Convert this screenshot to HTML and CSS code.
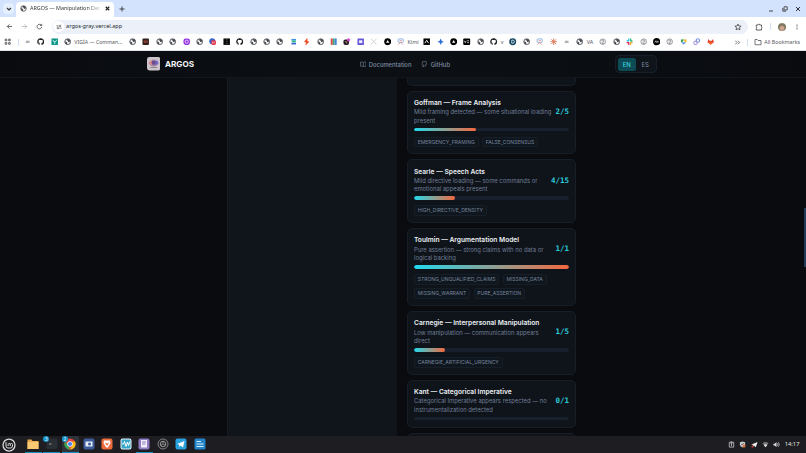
FILE: index.html
```
<!DOCTYPE html>
<html lang="en">
<head>
	<meta charset="UTF-8">
	<title>ARGOS — Manipulation Detector</title>
	<link rel="stylesheet" href="styles.css">
</head>
<body>
	<svg class="defs">
		<symbol id="globe" viewBox="0 0 16 16"><circle cx="8" cy="8" r="6.3" fill="none" stroke="#474a50" stroke-width="1.9"/><path d="M2 7l4 1.5 1.5 2.5-1 3-3-2zM6 2.5l4-.5 3.5 3-1.5 4-3-.5-.5-2.5-3-1z" fill="#474a50"/></symbol>
		<symbol id="ring" viewBox="0 0 16 16"><circle cx="8" cy="8" r="6" fill="none" stroke="#777a80" stroke-width="1.6"/><path d="M5 6l4-2 2 3-5 3 1 2 4-1" fill="none" stroke="#777a80" stroke-width="1.5"/></symbol>
		<symbol id="github" viewBox="0 0 16 16"><path fill="#17191d" d="M8 .6a7.5 7.5 0 0 0-2.4 14.6c.4.1.5-.2.5-.4v-1.4c-2.1.5-2.5-.9-2.5-.9-.4-.9-.9-1.1-.9-1.1-.7-.5.1-.5.1-.5.7.1 1.2.8 1.2.8.7 1.2 1.8.8 2.2.6.1-.5.3-.8.5-1-1.7-.2-3.4-.8-3.4-3.7 0-.8.3-1.5.8-2-.1-.2-.3-1 .1-2 0 0 .6-.2 2 .8a7 7 0 0 1 3.6 0c1.4-1 2-.8 2-.8.4 1 .2 1.8.1 2 .5.5.8 1.2.8 2 0 2.9-1.8 3.5-3.4 3.7.3.2.5.7.5 1.4v2.1c0 .2.1.5.5.4A7.5 7.5 0 0 0 8 .6z"/></symbol>
		<symbol id="dash" viewBox="0 0 16 16"><path d="M4 7h8M4 9.5h8" stroke="#777" stroke-width="1.5"/></symbol>
		<symbol id="kimi" viewBox="0 0 16 16"><rect x="2.500" y="2" width="11" height="7.500" rx="1.5" fill="none" stroke="#7ba4dc" stroke-width="1.8"/><path d="M3 14.500l5-5 5 5M5.500 5.700h5" fill="none" stroke="#e58b86" stroke-width="1.8"/></symbol>
		<symbol id="blackdot" viewBox="0 0 16 16"><circle cx="8" cy="8" r="7.5" fill="#000"/><path d="M8 4.5l3.5 6h-7z" fill="#fff"/></symbol>
	</svg>

	<div class="tabstrip">
		<div class="tab-search"><svg viewBox="0 0 8 8"><path d="M2 3l2 2 2-2" fill="none" stroke="#33363b" stroke-width="1.2"/></svg></div>
		<div class="tab">
			<svg class="fav"><use href="#globe"/></svg>
			<span class="tab-title">ARGOS — Manipulation Det</span>
			<svg class="tab-close" viewBox="0 0 8 8"><path d="M2 2l4 4M6 2L2 6" stroke="#222" stroke-width="1.3"/></svg>
		</div>
		<svg class="new-tab" viewBox="0 0 8 8"><path d="M4 1.5v5M1.5 4h5" stroke="#444" stroke-width="1"/></svg>
		<div class="win">
			<svg viewBox="0 0 8 8"><path d="M2 6h4" stroke="#444"/></svg>
			<svg viewBox="0 0 8 8"><path d="M3 1.8h3.2V5H3zM1.8 3v3.2H5" fill="none" stroke="#444" stroke-width=".9"/></svg>
			<svg viewBox="0 0 8 8"><path d="M2 2l4 4M6 2L2 6" stroke="#333" stroke-width="1"/></svg>
		</div>
	</div>

	<div class="toolbar">
		<svg class="nav-btn" viewBox="0 0 16 16"><path d="M14 8H3M8 3L3 8l5 5" fill="none" stroke="#444" stroke-width="1.8"/></svg>
		<svg class="nav-btn" viewBox="0 0 16 16"><path d="M2 8h11M8 3l5 5-5 5" fill="none" stroke="#aaa" stroke-width="1.6"/></svg>
		<svg class="nav-btn" viewBox="0 0 16 16"><path d="M13 9a5.3 5.3 0 1 1-1.5-4.5M13 2v4H9" fill="none" stroke="#444" stroke-width="1.8"/></svg>
		<div class="address">
			<span class="site-info"><svg viewBox="0 0 16 16"><path d="M1 5h6M9 11h6" stroke="#444" stroke-width="1.8"/><circle cx="11" cy="5" r="2" fill="none" stroke="#444" stroke-width="1.8"/><circle cx="5" cy="11" r="2" fill="none" stroke="#444" stroke-width="1.8"/></svg></span>
			<span class="url">argos-gray.vercel.app</span>
			<svg class="star" viewBox="0 0 16 16"><path d="M8 2l1.8 4 4.4.4-3.3 2.9 1 4.3L8 11.3l-3.9 2.3 1-4.3L1.8 6.4 6.2 6z" fill="none" stroke="#444" stroke-width="1.6"/></svg>
		</div>
		<svg class="ext" viewBox="0 0 16 16"><path d="M2.5 4h3.5a1.7 1.7 0 0 1 3.4 0H13v3.5a1.7 1.7 0 0 1 0 3V14H2.5v-3.5a1.7 1.7 0 0 0 0-3z" fill="none" stroke="#444" stroke-width="1.7"/></svg>
		<span class="sep"></span>
		<span class="avatar"></span>
		<svg class="more" viewBox="0 0 16 16"><g fill="#444"><circle cx="8" cy="3" r="1.5"/><circle cx="8" cy="8" r="1.5"/><circle cx="8" cy="13" r="1.5"/></g></svg>
	</div>

	<div class="bookmarks">
		<i><svg viewBox="0 0 16 16"><path d="M2.5 2.5h3.5v3.5H2.5zM10 2.5h3.5v3.5H10zM2.5 10h3.5v3.5H2.5zM10 10h3.5v3.5H10z" fill="none" stroke="#55585e" stroke-width="2"/></svg></i>
		<span class="sep first"></span>
		<i><svg><use href="#dash"/></svg></i>
		<i><svg><use href="#github"/></svg></i>
		<i><svg viewBox="0 0 16 16"><rect x="1" y="1" width="14" height="14" fill="#0d9488"/><path d="M4 4l2 4h4l2-4M8 8v5" fill="none" stroke="#d7fff8" stroke-width="1.8"/></svg></i>
		<i><svg><use href="#globe"/></svg></i>
		<span class="label vigia">VIGÍA — Comman…</span>
		<i><svg><use href="#globe"/></svg></i>
		<i><svg viewBox="0 0 16 16"><rect x="1" y="1" width="14" height="14" rx="2" fill="#33201d"/><path d="M5 5v6M8 5v6M11 5v6M4 8h8" stroke="#b6523c" stroke-width="1.3"/></svg></i>
		<i><svg><use href="#globe"/></svg></i>
		<i><svg><use href="#globe"/></svg></i>
		<i><svg viewBox="0 0 16 16"><rect x="1" y="1" width="14" height="14" rx="5" fill="#9233df"/><circle cx="8" cy="8" r="3.5" fill="none" stroke="#f0d6ff" stroke-width="2"/></svg></i>
		<i><svg><use href="#globe"/></svg></i>
		<i><svg viewBox="0 0 16 16"><circle cx="7" cy="7" r="6.5" fill="#3f65c8"/><rect x="5" y="5" width="10" height="10" rx="3" fill="#e0344a"/><path d="M8 8v4M11 8v4" stroke="#fff" stroke-width="1.3"/></svg></i>
		<i><svg viewBox="0 0 16 16"><rect x="1" y="1" width="14" height="14" fill="#080808"/><path d="M6 4h4M6 8h4M6 12h4" stroke="#777" stroke-width="1.2"/></svg></i>
		<i><svg><use href="#github"/></svg></i>
		<i><svg><use href="#globe"/></svg></i>
		<i><svg><use href="#globe"/></svg></i>
		<i><svg><use href="#globe"/></svg></i>
		<i><svg viewBox="0 0 16 16"><path d="M3 2h10v3.500H3z" fill="#3e91e0"/><path d="M3 5.500h9l1 4H5z" fill="#32b98a"/><path d="M3 10.500h10V14H3z" fill="#3e66d8"/></svg></i>
		<i><svg viewBox="0 0 16 16"><path d="M9 1L3 8l4 1-1 6 7-7-4-1z" fill="#ee4b22" stroke="#ee4b22"/></svg></i>
		<i><svg><use href="#globe"/></svg></i>
		<i><svg viewBox="0 0 16 16"><path d="M1.500 1h4.500v14H1.500z" fill="#dd4b4b"/><path d="M6 1h4v14H6z" fill="#41a678"/><path d="M10 1h4.500v14H10z" fill="#4388d8"/></svg></i>
		<i><svg viewBox="0 0 16 16"><rect x="1" y="3" width="12" height="12" rx="4" fill="#251b2b"/><circle cx="12" cy="4" r="3.5" fill="#d64bd1"/><path d="M4 8h4v4" fill="none" stroke="#e4b35e" stroke-width="1.5"/></svg></i>
		<i><svg viewBox="0 0 16 16"><rect x="1" y="1" width="14" height="14" rx="1" fill="#6558d8"/><rect x="4.5" y="5" width="7" height="6" fill="#f1efff"/></svg></i>
		<i><svg viewBox="0 0 16 16"><path d="M2 2l12 12M14 2L9 7M7 9l-5 5" stroke="#bbb" stroke-width="1.5"/></svg></i>
		<i><svg><use href="#blackdot"/></svg></i>
		<i><svg><use href="#kimi"/></svg></i>
		<span class="label kimi">Kimi</span>
		<i><svg viewBox="0 0 16 16"><rect x="1" y="1" width="14" height="14" fill="#000"/><path d="M4 11l4-6 4 6" fill="none" stroke="#fff" stroke-width="2"/></svg></i>
		<i><svg viewBox="0 0 16 16"><path d="M8 1q1 6 7 7-6 1-7 7-1-6-7-7 6-1 7-7z" fill="#2f6fd8"/></svg></i>
		<i><svg><use href="#blackdot"/></svg></i>
		<i><svg viewBox="0 0 16 16"><rect x=".5" y="1" width="15" height="14" rx="2" fill="#000"/><path d="M3 6l2 4 2-4M9 6h4M9 10h4" fill="none" stroke="#fff" stroke-width="1.5"/></svg></i>
		<i><svg><use href="#globe"/></svg></i>
		<i><svg><use href="#github"/></svg></i>
		<span class="label v">v</span>
		<i><svg viewBox="0 0 16 16"><circle cx="8" cy="8" r="7.5" fill="#17455d"/><path d="M6 4.5h2a3.5 3.5 0 0 1 0 7H6z" fill="none" stroke="#d8f0ff" stroke-width="1.8"/></svg></i>
		<i><svg><use href="#globe"/></svg></i>
		<i><svg><use href="#kimi"/></svg></i>
		<i><svg viewBox="0 0 16 16"><path d="M8 1v14M1 8h14M3 3l10 10M13 3L3 13" stroke="#dc7050" stroke-width="1.9"/></svg></i>
		<i><svg><use href="#dash"/></svg></i>
		<i><svg><use href="#globe"/></svg></i>
		<span class="label va">VA</span>
		<i><svg><use href="#ring"/></svg></i>
		<i><svg><use href="#globe"/></svg></i>
		<i><svg viewBox="0 0 16 16" stroke-width="2.8" stroke-linecap="round"><path d="M6 2v4M2.5 6H6" stroke="#36c5f0"/><path d="M10 2v4M13 6.5h-2" stroke="#2eb67d"/><path d="M10 10v4M10 10h3.5" stroke="#ecb22e"/><path d="M6 10v4M2.5 10H5" stroke="#e01e5a"/></svg></i>
		<i><svg><use href="#ring"/></svg></i>
		<i><svg viewBox="0 0 16 16"><circle cx="8" cy="8" r="7.8" fill="#000"/><path d="M4 10l2-4 2 4M9 6v4M11 6v4" fill="none" stroke="#fff" stroke-width="1.3"/></svg></i>
		<i><svg><use href="#ring"/></svg></i>
		<i><svg viewBox="0 0 16 16"><path d="M2 3h6v6H2z" fill="#38a45a"/><path d="M8 3h6v6H8z" fill="#f1bd2d"/><path d="M3 9h10l-5 5z" fill="#3d7fe5"/><circle cx="8" cy="7.5" r="2" fill="#fff"/></svg></i>
		<i><svg viewBox="0 0 16 16"><rect x="7" y="2" width="7" height="7" rx="2" fill="none" stroke="#5278df" stroke-width="2"/><rect x="2" y="7" width="7" height="7" rx="2" fill="none" stroke="#9a80cf" stroke-width="2"/></svg></i>
		<i><svg viewBox="0 0 16 16"><path d="M8 14.5L1 9l2-7 2.5 4h5L13 2l2 7z" fill="#e2432a"/><path d="M8 14.5L3.5 9h9z" fill="#fc6d26"/></svg></i>
		<svg class="chevrons" viewBox="0 0 16 16"><path d="M3 4l4 4-4 4M9 4l4 4-4 4" fill="none" stroke="#444" stroke-width="1.7"/></svg>
		<span class="sep"></span>
		<svg class="folder" viewBox="0 0 16 16"><path d="M2 3h4.5L8 5h6v8.5H2z" fill="none" stroke="#555" stroke-width="1.6"/></svg>
		<span class="label all">All Bookmarks</span>
	</div>

	<header class="nav">
		<div class="brand">
			<svg class="logo" viewBox="0 0 28 28"><rect width="28" height="28" rx="5" fill="#cdc5cb"/><path d="M3 13q11-16 22 0-11 15-22 0z" fill="#a58aa8"/><circle cx="9" cy="12" r="4.5" fill="#d98a84"/><circle cx="19" cy="12" r="4.5" fill="#746ac7"/><circle cx="14" cy="12" r="4.5" fill="#6d4b90"/><path d="M7 22h14" stroke="#8d8290" stroke-width="2"/></svg>
			<span>ARGOS</span>
		</div>
		<nav class="links">
			<a><svg viewBox="0 0 16 16"><path d="M8 4v10M8 4Q7 2.5 5 2.5H1.5v10H5.5Q7 12.5 8 14q1-1.5 2.5-1.5h4v-10H11Q9 2.5 8 4z"/></svg>Documentation</a>
			<a><svg viewBox="0 0 16 16"><path d="M10 15v-2.5q0-1.5-.7-2.2 4-.4 4-4.3 0-1.4-.9-2.5.4-1.2 0-2.5-1.3 0-2.6 1-1.8-.4-3.6 0Q4.9 1 3.6 1q-.4 1.3 0 2.5-.9 1.1-.9 2.5 0 3.9 4 4.3Q6 11 6 12.5V15M6 13q-3 1-4.5-2"/></svg>GitHub</a>
		</nav>
		<div class="lang"><span class="on">EN</span><span>ES</span></div>
	</header>

	<main class="page">
		<div class="side"></div>
		<div class="cards">
			<section class="card cut"></section>
			<section class="card">
				<div class="head">
					<div class="info"><h3>Goffman — Frame Analysis</h3><p>Mild framing detected — some situational loading<br>present</p></div>
					<b>2/5</b>
				</div>
				<div class="bar"><div style="width:40%"></div></div>
				<div class="tags"><span>EMERGENCY_FRAMING</span><span>FALSE_CONSENSUS</span></div>
			</section>
			<section class="card">
				<div class="head">
					<div class="info"><h3>Searle — Speech Acts</h3><p>Mild directive loading — some commands or<br>emotional appeals present</p></div>
					<b>4/15</b>
				</div>
				<div class="bar"><div style="width:26.7%"></div></div>
				<div class="tags"><span>HIGH_DIRECTIVE_DENSITY</span></div>
			</section>
			<section class="card">
				<div class="head">
					<div class="info"><h3>Toulmin — Argumentation Model</h3><p>Pure assertion — strong claims with no data or<br>logical backing</p></div>
					<b>1/1</b>
				</div>
				<div class="bar"><div style="width:100%"></div></div>
				<div class="tags"><span>STRONG_UNQUALIFIED_CLAIMS</span><span>MISSING_DATA</span><span>MISSING_WARRANT</span><span>PURE_ASSERTION</span></div>
			</section>
			<section class="card">
				<div class="head">
					<div class="info"><h3>Carnegie — Interpersonal Manipulation</h3><p>Low manipulation — communication appears<br>direct</p></div>
					<b>1/5</b>
				</div>
				<div class="bar"><div style="width:20%"></div></div>
				<div class="tags"><span>CARNEGIE_ARTIFICIAL_URGENCY</span></div>
			</section>
			<section class="card no-tags">
				<div class="head">
					<div class="info"><h3>Kant — Categorical Imperative</h3><p>Categorical Imperative appears respected — no<br>instrumentalization detected</p></div>
					<b>0/1</b>
				</div>
				<div class="bar"><div style="width:0%"></div></div>
			</section>
			<section class="card cut"></section>
		</div>
		<div class="scroll-thumb"></div>
	</main>

	<footer class="taskbar">
		<svg class="mint" viewBox="0 0 28 28"><circle cx="14" cy="14" r="12" fill="none" stroke="#ddd" stroke-width="2.5"/><path d="M8 8v8q0 4 4 4h5q4 0 4-4v-3q0-2-2.2-2t-2.2 2v3M16.6 13q0-2-2.2-2t-2.2 2v3" fill="none" stroke="#ddd" stroke-width="2"/></svg>
		<div class="apps">
			<div class="app open"><svg viewBox="0 0 24 24"><path d="M1 3h8l2 3h12v16H1z" fill="#e8a94f"/><path d="M1 8h22v14H1z" fill="#fac873"/></svg></div>
			<div class="app open"><svg viewBox="0 0 24 24"><rect x="1" y="1" width="22" height="21" rx="3" fill="#2a2f35"/><path d="M6 12h5" stroke="#999" stroke-width="2"/></svg><em>3</em></div>
			<div class="app open active"><svg viewBox="0 0 24 24"><circle cx="12" cy="12" r="11" fill="#e9483b"/><path d="M2 7l6 7 4 9A11 11 0 0 1 2 7z" fill="#34a853"/><path d="M12 23l5-9V7h5a11 11 0 0 1-10 16z" fill="#fbc116"/><circle cx="12" cy="12" r="5.5" fill="#fff"/><circle cx="12" cy="12" r="4.2" fill="#4285f4"/></svg><em>2</em></div>
			<div class="app"><svg viewBox="0 0 24 24"><rect x="1" y="1" width="22" height="22" rx="4" fill="#3d5c9c"/><path d="M5 7h14v10H5z" fill="#e8edf7"/><circle cx="13" cy="12" r="3" fill="#3d5c9c"/></svg></div>
			<div class="app"><svg viewBox="0 0 24 24"><rect x="1" y="1" width="22" height="22" rx="4" fill="#ed6a3b"/><path d="M6 5h12l1 5-4 7-3 3-3-3-4-7z" fill="#fff"/><path d="M8 9l4 2 4-2-3 6h-2z" fill="#ed6a3b"/></svg></div>
			<div class="app"><svg viewBox="0 0 24 24"><rect x="1" y="1" width="22" height="22" rx="4" fill="#e5f5fa"/><rect x="3" y="3" width="18" height="18" rx="2" fill="#38a6c9"/><path d="M4 12h3l2-5 3 10 3-9 2 7 3-8" fill="none" stroke="#fff" stroke-width="2"/></svg></div>
			<div class="app open"><svg viewBox="0 0 24 24"><rect x="1" y="1" width="22" height="22" rx="4" fill="#8e7cc3"/><path d="M6 4h12v15H6z" fill="#f2effa"/><path d="M8 8h8M8 12h7" stroke="#8e7cc3" stroke-width="2"/></svg></div>
			<div class="app"><svg viewBox="0 0 24 24"><circle cx="12" cy="12" r="10" fill="#202124" stroke="#8d8d90" stroke-width="1.8"/><circle cx="12" cy="12" r="5.5" fill="none" stroke="#98989b" stroke-width="2"/><path d="M12 12V6M12 12l5 3M12 12l-5 3" stroke="#98989b" stroke-width="1.6"/></svg></div>
			<div class="app"><svg viewBox="0 0 24 24"><rect x="1" y="1" width="22" height="22" rx="4" fill="#28a0db"/><path d="M4 12l15-6-3 13-5-4-2 3-1-5z" fill="#fff"/></svg></div>
			<div class="app"><svg viewBox="0 0 24 24"><rect x="1" y="1" width="22" height="22" rx="3" fill="#2285c8"/><path d="M5 7h9M5 12h14M5 17h14" stroke="#d9f0ff" stroke-width="2.2"/></svg></div>
		</div>
		<div class="tray">
			<svg viewBox="0 0 16 16"><path d="M3 3h10v11H3zM6 2h4M8 6v6M6 6h4" fill="none" stroke="#ddd" stroke-width="1.6"/></svg>
			<svg viewBox="0 0 16 16"><path d="M8 1l6 2v5q0 5-6 7-6-2-6-7V3z" fill="#c9c9c9"/><path d="M5 7l2 2 4-4" fill="none" stroke="#333" stroke-width="1.5"/><circle cx="11.5" cy="11.5" r="3.5" fill="#df7039"/></svg>
			<svg viewBox="0 0 16 16"><path d="M1 8l14-6-4 12-4-3-2 2V9z" fill="#eee"/><circle cx="3.5" cy="12.5" r="2.5" fill="#d93838"/></svg>
			<svg viewBox="0 0 16 16"><path d="M1 5q7-6 14 0l-7 9z" fill="#777"/><path d="M4 9q4-3 8 0l-4 5z" fill="#ddd"/></svg>
			<svg viewBox="0 0 16 16"><path d="M1 6h3l4-4v12l-4-4H1z" fill="#ddd"/><path d="M10 5q2 3 0 6M12.5 3q3.5 5 0 10" fill="none" stroke="#ddd" stroke-width="1.6"/></svg>
			<span>14:17</span>
		</div>
	</footer>
</body>
</html>
```
FILE: styles.css
```
*{
	margin: 0;
	padding: 0;
	box-sizing: border-box;
}
body{
	width: 806px;
	height: 453px;
	overflow: hidden;
	display: flex;
	flex-direction: column;
	background: #090b0f;
	font-family: Inter, "Liberation Sans", sans-serif;
}
svg{
	display: block;
	flex: none;
}
.defs{
	position: absolute;
	width: 0;
	height: 0;
}

/* browser window */
.tabstrip{
	height: 17px;
	flex: none;
	display: flex;
	align-items: center;
	background: #d3e3fd;
	padding-left: 3px;
}
.tab-search{
	width: 11px;
	height: 11px;
	border-radius: 4px;
	background: #e6effe;
	padding: 1.5px;
}
.tab-search svg{
	width: 8px;
	height: 8px;
}
.tab{
	width: 98px;
	height: 15px;
	margin: 2px 0 0 2px;
	padding: 0 3px 2px 4px;
	display: flex;
	align-items: center;
	background: #fff;
	border-radius: 4px 4px 0 0;
}
.fav{
	width: 7px;
	height: 7px;
}
.tab-title{
	width: 72px;
	margin-left: 3px;
	white-space: nowrap;
	font: 5.4px/9px "Noto Sans", sans-serif;
	color: #33363b;
	-webkit-mask-image: linear-gradient(90deg, #000 80%, transparent);
	mask-image: linear-gradient(90deg, #000 80%, transparent);
}
.tab-close{
	width: 7px;
	height: 7px;
	margin-left: 2px;
}
.new-tab{
	width: 8px;
	height: 8px;
	margin-left: 4px;
}
.win{
	display: flex;
	gap: 5.5px;
	margin-left: auto;
	padding-right: 4px;
}
.win svg{
	width: 8px;
	height: 8px;
}
.toolbar{
	height: 19px;
	flex: none;
	display: flex;
	align-items: center;
	background: #fff;
	padding: 0 6px;
}
.nav-btn{
	width: 7px;
	height: 7px;
	margin-right: 8.2px;
}
.address{
	width: 696px;
	height: 14px;
	border-radius: 7px;
	background: #ebf0f9;
	display: flex;
	align-items: center;
	padding: 0 6px 0 1.5px;
}
.site-info{
	width: 11px;
	height: 11px;
	border-radius: 50%;
	background: #fff;
	padding: 2.5px;
}
.site-info svg{
	width: 6px;
	height: 6px;
}
.url{
	margin-left: 2px;
	font: 5.55px/9px "Noto Sans", sans-serif;
	color: #25282d;
}
.star{
	width: 8px;
	height: 8px;
	margin-left: auto;
}
.ext{
	width: 8px;
	height: 8px;
	margin-left: 7px;
}
.sep{
	width: 1px;
	height: 7px;
	background: #cfe0f5;
}
.toolbar .sep{
	margin: 0 7px;
}
.avatar{
	width: 8px;
	height: 8px;
	border-radius: 50%;
	background: radial-gradient(circle at 50% 65%, #d0a58d 25%, #766d59 50%, #a9ae9a);
}
.more{
	width: 6px;
	height: 6px;
	margin-left: 8px;
}
.bookmarks{
	height: 15px;
	flex: none;
	display: flex;
	align-items: center;
	background: #fff;
	padding: 0 6px 2px 1.3px;
	border-bottom: 1px solid #dfe3ea;
}
.bookmarks i{
	width: 13.42px;
	flex: none;
	display: flex;
	justify-content: center;
}
.bookmarks i svg{
	width: 7.4px;
	height: 7.4px;
}
.bookmarks .first{
	margin: 0 2px 0 3px;
}
.label{
	flex: none;
	white-space: nowrap;
	font: 5.4px/9px "Noto Sans", sans-serif;
	color: #55585e;
}
.vigia{
	width: 51.6px;
	font-size: 5.2px;
}
.kimi{
	width: 12.8px;
}
.v{
	width: 5.6px;
}
.va{
	width: 9.6px;
}
.chevrons{
	width: 7px;
	height: 7px;
	margin-left: auto;
}
.bookmarks .chevrons + .sep{
	margin: 0 6px 0 6px;
}
.folder{
	width: 8px;
	height: 8px;
	margin-right: 2.5px;
}
.all{
	font-size: 5.3px;
}

/* argos header */
.nav{
	height: 27px;
	flex: none;
	display: grid;
	grid-template-columns: 213px 1fr 42px;
	align-items: center;
	padding: 0 149px 0 146.5px;
	background: linear-gradient(90deg, #090b0f, #0c1015 50%, #090b0f);
	border-bottom: 1px solid #11171d;
}
.brand{
	display: flex;
	align-items: center;
	gap: 5px;
	color: #f4f6f8;
	font-size: 8.15px;
	font-weight: 700;
}
.logo{
	width: 13.4px;
	height: 13.4px;
}
.links{
	display: flex;
	gap: 10px;
}
.links a{
	display: flex;
	align-items: center;
	gap: 2.6px;
	color: #7f8ea2;
	font-size: 5.85px;
	font-weight: 500;
}
.links svg{
	width: 6.7px;
	height: 6.7px;
	fill: none;
	stroke: #7f8ea2;
	stroke-width: 1.4;
}
.lang{
	width: 42px;
	height: 18px;
	padding: 1.5px;
	display: flex;
	border: 1px solid #161f29;
	border-radius: 4px;
	background: #0f141b;
	color: #718094;
	font-size: 6px;
	font-weight: 500;
}
.lang span{
	width: 19px;
	line-height: 13px;
	text-align: center;
	border-radius: 2.5px;
}
.lang .on{
	background: #0d4b55;
	color: #3bd1df;
}

/* analysis page */
.page{
	flex: 1;
	min-height: 0;
	display: flex;
	position: relative;
	overflow: hidden;
	padding-left: 227px;
}
.side{
	width: 170px;
	background: #10151c;
	border-left: 1px solid #151b22;
	flex: none;
}
.cards{
	width: 169.5px;
	margin-left: 9.5px;
	display: flex;
	flex-direction: column;
	gap: 5px;
}
.card{
	flex: none;
	padding: 7.3px 6px 5.9px 6.5px;
	border: 1px solid #171e27;
	border-radius: 5px;
	background: #0f131a;
}
.no-tags{
	padding-bottom: 6.7px;
}
.cut{
	height: 14px;
	padding: 0;
}
.cut:first-child{
	height: 7.7px;
	border-top: 0;
	border-radius: 0 0 5px 5px;
}
.head{
	display: flex;
	align-items: center;
	justify-content: space-between;
	white-space: nowrap;
}
.info{
	width: 137px;
}
.card h3{
	font-size: 6.65px;
	line-height: 9.4px;
	font-weight: 600;
	color: #edf1f5;
}
.card p{
	font-size: 5.88px;
	line-height: 8.4px;
	color: #6f7f96;
}
.head b{
	font: bold 7.5px/10px "DejaVu Sans Mono", monospace;
	color: #2bccdb;
}
.bar{
	height: 3.7px;
	margin-top: 2.6px;
	border-radius: 2px;
	background: #17202c;
	overflow: hidden;
}
.bar div{
	height: 100%;
	border-radius: 2px;
	background: linear-gradient(90deg, #22d9ed, #f4683e);
}
.tags{
	display: flex;
	flex-wrap: wrap;
	gap: 3.4px;
	margin-top: 5.2px;
}
.tags span{
	height: 10.8px;
	padding: 0 2.8px;
	font-size: 5.02px;
	line-height: 8.8px;
	color: #74849b;
	border: 1px solid #161e28;
	border-radius: 2px;
	background: #10161e;
}
.scroll-thumb{
	position: absolute;
	right: 0;
	top: 130px;
	width: 2px;
	height: 59px;
	background: #213c58;
}

/* desktop panel */
.taskbar{
	height: 17px;
	flex: none;
	display: flex;
	align-items: center;
	background: #1e1d22;
	padding: 0 6.5px 0 2px;
}
.mint{
	width: 14px;
	height: 14px;
}
.apps{
	display: flex;
	margin-left: 8.7px;
	gap: 1.5px;
}
.app{
	position: relative;
	width: 17px;
	height: 17px;
	padding: 2px 2.5px;
}
.app svg{
	width: 12px;
	height: 12px;
}
.open{
	border-bottom: 1px solid #168fbe;
}
.active{
	background: #303239;
}
.app em{
	position: absolute;
	left: 0;
	top: 0;
	width: 6px;
	height: 6px;
	border-radius: 50%;
	background: #1695cb;
	color: #fff;
	font: 4.5px/6px "Noto Sans", sans-serif;
	text-align: center;
}
.tray{
	margin-left: auto;
	display: flex;
	align-items: center;
	gap: 4.4px;
	color: #e4e4e6;
	font: 5.8px/9px "Noto Sans", sans-serif;
}
.tray svg{
	width: 7px;
	height: 7px;
}
```
